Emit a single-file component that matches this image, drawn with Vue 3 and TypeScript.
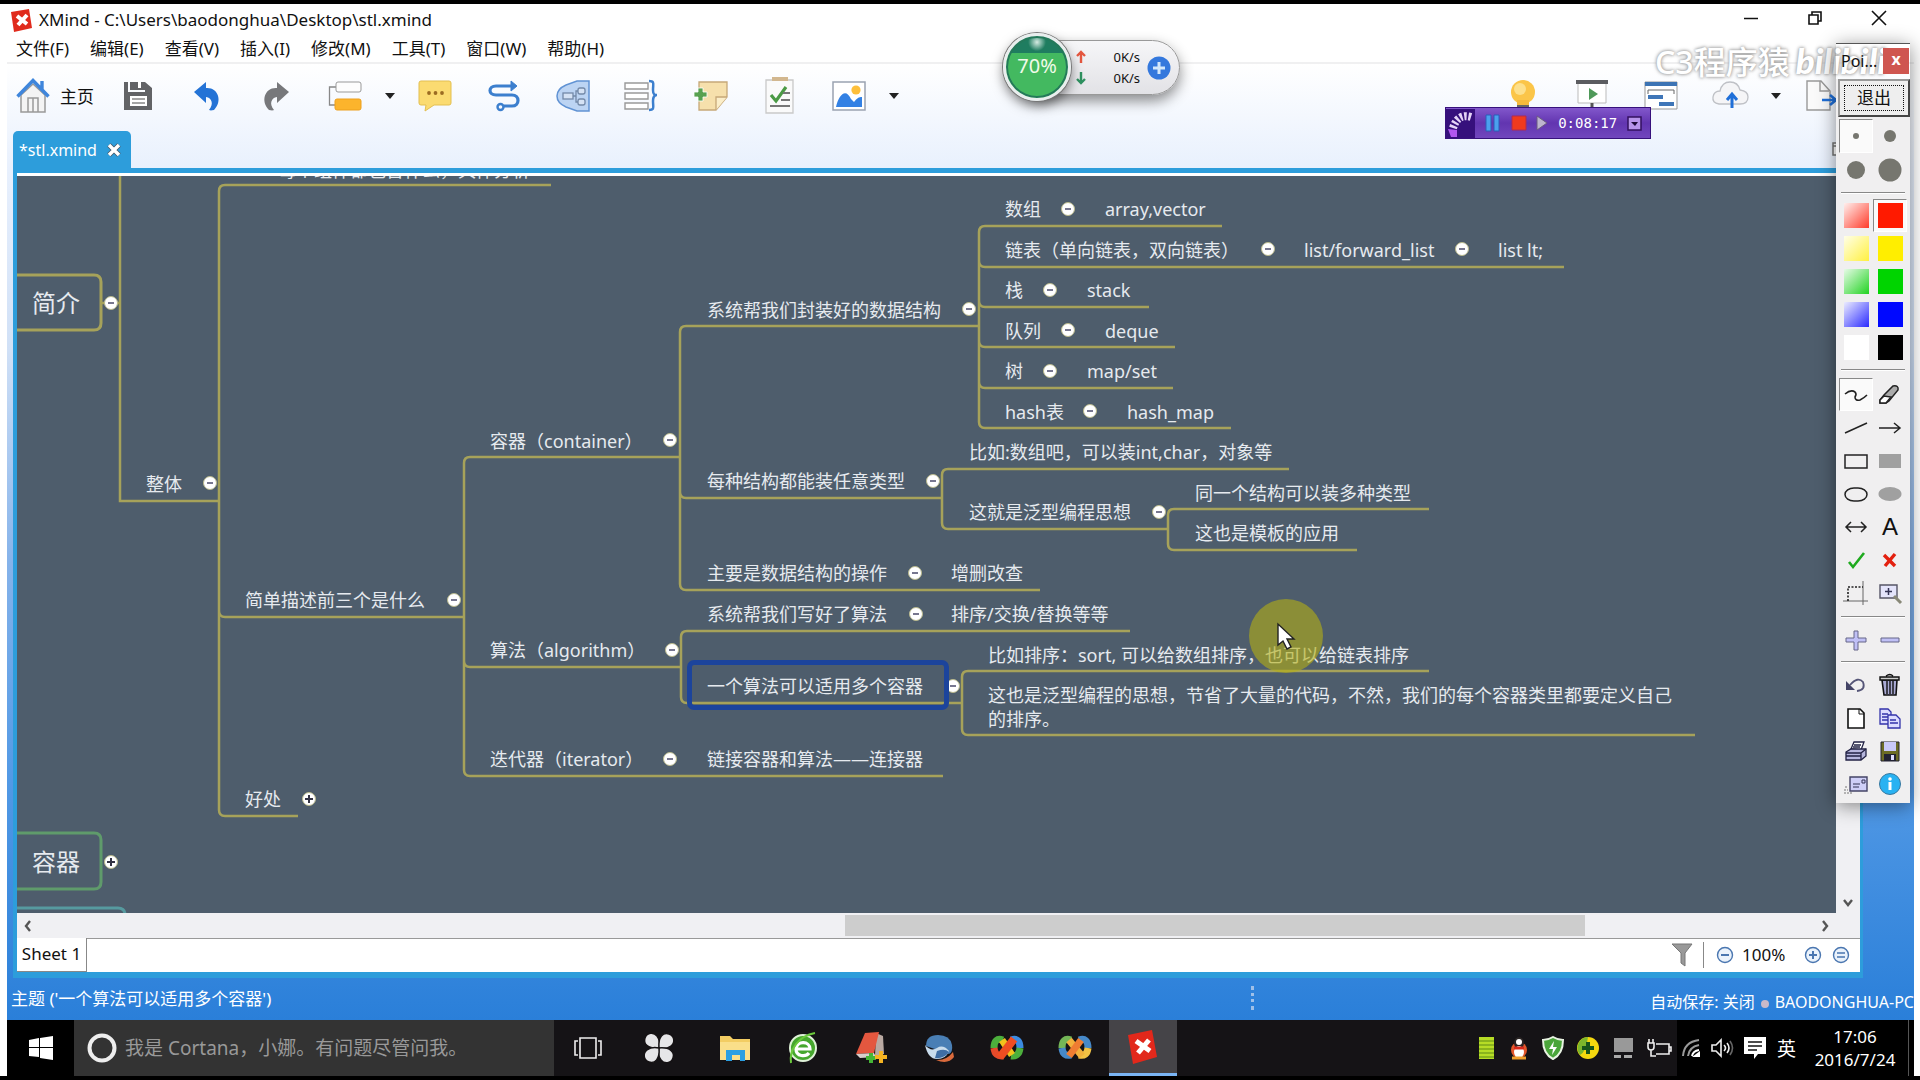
<script setup lang="ts">
interface Topic { x: number; y: number; text: string; size?: 'main' }
interface Toggle { x: number; y: number; open: boolean }
interface Spine { x: number; ends: [number, number][] }

// Scroll offset of the visible part of the map.
const origin = { x: 17, y: 176 }

const menus = ['文件(F)', '编辑(E)', '查看(V)', '插入(I)', '修改(M)', '工具(T)', '窗口(W)', '帮助(H)']

const topics: Topic[] = [
  { x: 278, y: 170, text: '每个组件都包含什么，具体分析' },
  { x: 32, y: 303, text: '简介', size: 'main' },
  { x: 32, y: 862, text: '容器', size: 'main' },
  { x: 146, y: 484, text: '整体' },
  { x: 245, y: 600, text: '简单描述前三个是什么' },
  { x: 245, y: 799, text: '好处' },
  { x: 490, y: 441, text: '容器（container）' },
  { x: 490, y: 650, text: '算法（algorithm）' },
  { x: 490, y: 759, text: '迭代器（iterator）' },
  { x: 707, y: 310, text: '系统帮我们封装好的数据结构' },
  { x: 707, y: 481, text: '每种结构都能装任意类型' },
  { x: 707, y: 573, text: '主要是数据结构的操作' },
  { x: 707, y: 614, text: '系统帮我们写好了算法' },
  { x: 707, y: 686, text: '一个算法可以适用多个容器' },
  { x: 707, y: 759, text: '链接容器和算法——连接器' },
  { x: 1005, y: 209, text: '数组' },
  { x: 1105, y: 209, text: 'array,vector' },
  { x: 1005, y: 250, text: '链表（单向链表，双向链表）' },
  { x: 1304, y: 250, text: 'list/forward_list' },
  { x: 1498, y: 250, text: 'list lt;' },
  { x: 1005, y: 290, text: '栈' },
  { x: 1087, y: 290, text: 'stack' },
  { x: 1005, y: 331, text: '队列' },
  { x: 1105, y: 331, text: 'deque' },
  { x: 1005, y: 371, text: '树' },
  { x: 1087, y: 371, text: 'map/set' },
  { x: 1005, y: 412, text: 'hash表' },
  { x: 1127, y: 412, text: 'hash_map' },
  { x: 969, y: 452, text: '比如:数组吧，可以装int,char，对象等' },
  { x: 969, y: 512, text: '这就是泛型编程思想' },
  { x: 1195, y: 493, text: '同一个结构可以装多种类型' },
  { x: 1195, y: 533, text: '这也是模板的应用' },
  { x: 951, y: 573, text: '增删改查' },
  { x: 951, y: 614, text: '排序/交换/替换等等' },
  { x: 988, y: 655, text: '比如排序：sort, 可以给数组排序，也可以给链表排序' },
  { x: 988, y: 695, text: '这也是泛型编程的思想，节省了大量的代码，不然，我们的每个容器类里都要定义自己\n的排序。' },
]

const toggles: Toggle[] = [
  { x: 111, y: 303, open: true }, { x: 210, y: 483, open: true }, { x: 969, y: 309, open: true },
  { x: 1068, y: 209, open: true }, { x: 1268, y: 249, open: true }, { x: 1462, y: 249, open: true },
  { x: 1050, y: 290, open: true }, { x: 1068, y: 330, open: true }, { x: 1050, y: 371, open: true },
  { x: 1090, y: 411, open: true }, { x: 670, y: 440, open: true }, { x: 933, y: 481, open: true },
  { x: 1159, y: 512, open: true }, { x: 915, y: 573, open: true }, { x: 916, y: 614, open: true },
  { x: 953, y: 686, open: true }, { x: 454, y: 600, open: true }, { x: 672, y: 650, open: true },
  { x: 670, y: 759, open: true }, { x: 309, y: 799, open: false }, { x: 111, y: 862, open: false },
]

const spines: Spine[] = [
  { x: 219, ends: [[185, 551], [617, 464], [816, 298]] },
  { x: 464, ends: [[457, 680], [667, 681], [776, 943]] },
  { x: 680, ends: [[326, 979], [498, 942], [590, 1040]] },
  { x: 979, ends: [[226, 1222], [267, 1564], [307, 1149], [347, 1175], [388, 1173], [428, 1231]] },
  { x: 942, ends: [[469, 1289], [529, 1168]] },
  { x: 1168, ends: [[509, 1429], [550, 1357]] },
  { x: 681, ends: [[631, 1130], [703, 962]] },
  { x: 962, ends: [[671, 1429], [735, 1695]] },
]

function spinePath(s: Spine): string {
  const r = 6
  const last = s.ends.length - 1
  return s.ends
    .map(([y, x2], i) =>
      i === 0
        ? `M${x2} ${y}H${s.x + r}Q${s.x} ${y} ${s.x} ${y + r}V${s.ends[last][0] - r}`
        : `M${s.x} ${y - r}Q${s.x} ${y} ${s.x + r} ${y}H${x2}`)
    .join('')
}

const inks = [
  ['red', '#fff0ee', '#ff3b2a', '#ff1a00'],
  ['yellow', '#ffffe8', '#fff040', '#ffee00'],
  ['green', '#e6fbe6', '#22d322', '#00d400'],
  ['blue', '#ececff', '#2a2aff', '#0008ff'],
  ['black', '#ffffff', '#ffffff', '#000000'],
]
</script>

<template>
  <div class="screen">
    <div class="desk">
      <header class="titlebar">
        <svg class="logo" width="22" height="26" viewBox="0 0 22 26"><path d="M0 5 18 2l3 19-18 4z" fill="#e02b1d" /><path d="m6 9 10 8M16 8 7 18" stroke="#fff" stroke-width="4" /></svg>
        <h1>XMind - C:\Users\baodonghua\Desktop\stl.xmind</h1>
        <div class="winbtns">
          <button aria-label="最小化"><svg width="16" height="16"><path d="M1 8.500h14" stroke="#111" stroke-width="1.500" /></svg></button>
          <button aria-label="还原"><svg width="16" height="16" fill="none" stroke="#111" stroke-width="1.600"><path d="M2 5h9v9H2zM5 5V2h9v9h-3" /></svg></button>
          <button aria-label="关闭"><svg width="16" height="16"><path d="m1 1 14 14M15 1 1 15" stroke="#111" stroke-width="1.600" /></svg></button>
        </div>
      </header>
      <nav class="menubar"><button v-for="m in menus" :key="m">{{ m }}</button></nav>

      <div class="body">
        <div class="toolbar">
          <button class="home">
            <svg width="34" height="36" viewBox="0 0 34 36"><path d="M5 17v17h24V17L17 6z" fill="#f4f4f4" stroke="#999" stroke-width="1.500" /><path d="M12 34V20h10v14M17 20v14" fill="none" stroke="#999" stroke-width="1.500" /><path d="M1.500 18.500 17 2.500l15.500 16M26 11V3" fill="none" stroke="#3f86dc" stroke-width="3.400" /></svg>
            <span>主页</span>
          </button>
          <button aria-label="保存"><svg width="34" height="34" viewBox="0 0 34 34"><path d="M3 3h4v10h17V3l7 6v22H3z" fill="#626366" /><path d="M9 3h15v8H9z" fill="#626366" /><path d="M17 3h3v6h-3z" fill="#fff" /><path d="M9 17h17v10H9z" fill="#fff" /><path d="M11 20h13M11 24h13" stroke="#888" stroke-width="1.500" /></svg></button>
          <button aria-label="撤销"><svg width="34" height="34" viewBox="0 0 34 34"><path d="M4 13 16 3v6c12-1 17 13 8 22-4 1-5 0-5 0 5-6 3-12-3-13v6z" fill="#2473d6" /></svg></button>
          <button aria-label="重做"><svg width="34" height="34" viewBox="0 0 34 34"><path d="M30 13 18 3v6C6 8 1 22 10 31c4 1 5 0 5 0-5-6-3-12 3-13v6z" fill="#77787b" /></svg></button>
          <span class="split">
            <button aria-label="主题"><svg width="34" height="34" viewBox="0 0 34 34"><path d="M8 8H1.500v18H8" fill="none" stroke="#888" stroke-width="1.300" /><rect x="8" y="3" width="25" height="10" rx="2" fill="#fdfdfd" stroke="#999" /><rect x="7" y="20" width="26" height="11" rx="2" fill="#fcb42c" stroke="#eda01d" /></svg></button>
            <button class="caret" aria-label="更多主题"><svg width="12" height="8"><path d="M1 1h10L6 7z" fill="#222" /></svg></button>
          </span>
          <button aria-label="标注"><svg width="34" height="34" viewBox="0 0 34 34"><path d="M3 2h28q2 0 2 2v20q0 2-2 2H16l-9 6 1-6H3q-2 0-2-2V4q0-2 2-2z" fill="#fbdb71" stroke="#e3bf51" /><g fill="#9b6b22"><circle cx="11" cy="14" r="1.900" /><circle cx="17.500" cy="14" r="1.900" /><circle cx="24" cy="14" r="1.900" /></g></svg></button>
          <button aria-label="联系"><svg width="34" height="34" viewBox="0 0 34 34" fill="none" stroke="#3c7fce" stroke-width="3.200"><path d="M27 7H9c-8 0-8 9 0 9h16c8 0 8 11 0 11h-8" /><circle cx="13.500" cy="28" r="3" stroke-width="2.400" /><path d="m24 2 6 5-6 5z" fill="#3c7fce" stroke-width="1" /></svg></button>
          <button aria-label="外框"><svg width="34" height="34" viewBox="0 0 34 34"><path d="M10 6 21 2h12v30H21L10 28Q1 24 1 17t9-11z" fill="#bcd4f3" stroke="#6193d4" stroke-width="1.500" /><g fill="#d5e2f4" stroke="#7389a8" stroke-width="1.300"><path d="M17 17h3m3-5h-3v11h3" fill="none" /><rect x="7" y="14" width="10" height="6" /><rect x="22" y="9" width="7" height="6" rx="2" /><rect x="22" y="20" width="7" height="6" rx="2" /></g></svg></button>
          <button aria-label="概要"><svg width="36" height="34" viewBox="0 0 36 34" fill="#fff" stroke="#999" stroke-width="1.400"><path d="M1 4h23v6H1zM1 14h23v6H1zM1 24h23v6H1z" /><path d="M25 2c6 0 4 3 4 9 0 4 1 5 4 5-3 0-4 2-4 6 0 6 2 9-4 9" fill="none" stroke="#3c7fce" stroke-width="2.500" /></svg></button>
          <button aria-label="备注"><svg width="34" height="34" viewBox="0 0 34 34"><path d="M5 3h28v15L22 31H5z" fill="#f6e0ac" stroke="#c6a878" stroke-width="1.300" /><path d="M33 18H22v13" fill="#fbeec9" stroke="#c6a878" stroke-width="1.300" /><path d="M4 9h5v4h4v5H9v4H4v-4H0v-5h4z" fill="#58a150" stroke="#fff" stroke-width=".8" /></svg></button>
          <button aria-label="任务"><svg width="34" height="38" viewBox="0 0 34 38"><path d="M3 3h27v33H3z" fill="#fafafa" stroke="#c9c9c9" stroke-width="1.300" /><path d="M9 0h16v4H9z" fill="#d2b78f" /><path d="m8 18 5 6 10-14" fill="none" stroke="#4b9a45" stroke-width="3.200" /><path d="M20 16h7M18 23h9M7 29h20" stroke="#777" stroke-width="1.800" /></svg></button>
          <span class="split">
            <button aria-label="图片"><svg width="34" height="34" viewBox="0 0 34 34"><path d="M1 3h32v28H1z" fill="#fff" stroke="#9aa3b1" stroke-width="1.500" /><path d="M4 28c3-13 10-19 15-8l3 3c3-4 5-5 8-5v10z" fill="#3381e4" /><circle cx="24" cy="11" r="4.600" fill="#fdbf3b" /></svg></button>
            <button class="caret" aria-label="更多插入"><svg width="12" height="8"><path d="M1 1h10L6 7z" fill="#222" /></svg></button>
          </span>
          <div class="grow"></div>
          <button aria-label="灵感"><svg width="34" height="36" viewBox="0 0 34 36"><circle cx="17" cy="14" r="12" fill="#fbc549" /><circle cx="14" cy="11" r="6" fill="#fde08c" /><path d="M11 22h12v5H11z" fill="#f5b93c" /><path d="M11 27h12v6H11z" fill="#666" /></svg></button>
          <button aria-label="演示"><svg width="34" height="36" viewBox="0 0 34 36"><path d="M3 4h28v21H3z" fill="#fff" stroke="#bbb" /><path d="M1 2h32v4H1z" fill="#5b5c60" /><path d="m14 10 9 6-9 6z" fill="#4f9959" /><path d="M17 25v8" stroke="#555" stroke-width="3" /></svg></button>
          <button aria-label="甘特图"><svg width="34" height="34" viewBox="0 0 34 34"><path d="M1 3h32v27H1z" fill="#fff" stroke="#999" /><path d="M1 3h32v4H1z" fill="#3d74b4" /><path d="M4 15v-4h26v4" fill="none" stroke="#666" /><path d="M4 16h15v4H4zM15 23h15v4H15z" fill="#3f76b8" /></svg></button>
          <button aria-label="上传"><svg width="38" height="34" viewBox="0 0 38 34"><path d="M8 25Q1 24 2 18q1-6 7-6 2-9 10-9t10 8q8 1 8 7 0 7-8 7z" fill="#f5f5f7" stroke="#bfc1c6" stroke-width="1.300" /><path d="M21 29V16m-5 5 5-6 5 6" fill="none" stroke="#1f6fd8" stroke-width="3" /></svg></button>
          <button class="caret" aria-label="更多上传"><svg width="12" height="8"><path d="M1 1h10L6 7z" fill="#222" /></svg></button>
          <button class="export" aria-label="导出"><svg width="34" height="34" viewBox="0 0 34 34"><path d="M2 2h14l9 10v19H2z" fill="#fafafa" stroke="#999" stroke-width="1.400" /><path d="M15 2v10h9" fill="none" stroke="#999" stroke-width="1.400" /><path d="M17 21h13m-5-5 6 5-6 5" fill="none" stroke="#1f6fd8" stroke-width="2.600" /></svg></button>
        </div>

        <div class="tabs">
          <div class="tab"><span>*stl.xmind</span><button aria-label="关闭标签"><svg width="16" height="16"><path d="m3 3 10 10M13 3 3 13" stroke="#456" stroke-width="5" /><path d="m3 3 10 10M13 3 3 13" stroke="#fff" stroke-width="3.500" /></svg></button></div>
          <svg class="maxi" width="16" height="14"><path d="M1 1h14v12H1zM1 4h14" fill="#fff" stroke="#777" stroke-width="1.500" /></svg>
        </div>

        <main class="editor">
          <div class="view">
            <section class="canvas">
              <svg class="lines">
                <g :transform="`translate(${-origin.x} ${-origin.y})`" fill="none" stroke="#a6a25a" stroke-width="3">
                  <path d="M120 170V501H219M101 303h19" stroke-width="2.500" />
                  <path v-for="s in spines" :key="s.x" :d="spinePath(s)" stroke-width="2.500" />
                  <path d="M10 275H94Q101 275 101 282V323Q101 330 94 330H10" />
                  <path d="M10 833H94Q101 833 101 840V882Q101 889 94 889H10" stroke="#5f9b6b" />
                  <path d="M10 908H118Q125 908 125 915V925" stroke="#569a9f" />
                </g>
              </svg>
              <button
                v-for="t in toggles" :key="`${t.x}-${t.y}`" class="toggle" :class="{ closed: !t.open }"
                :aria-label="t.open ? '折叠' : '展开'" :style="{ left: `${t.x - origin.x}px`, top: `${t.y - origin.y}px` }"
              ></button>
              <div class="selection"></div>
              <div v-for="t in topics" :key="t.text" class="topic" :class="t.size" :style="{ left: `${t.x - origin.x}px`, top: `${t.y - origin.y}px` }">{{ t.text }}</div>
              <div class="spot"></div>
              <svg class="pointer" width="20" height="28" viewBox="0 0 20 28"><path d="M2 1v21l5-4 4 8 4-2-4-8h7z" fill="#fff" stroke="#222" stroke-width="1.400" /></svg>
            </section>
            <div class="vscroll"><svg width="12" height="12"><path d="m2 3 4 5 4-5" fill="none" stroke="#555" stroke-width="2.400" /></svg></div>
          </div>
          <div class="hscroll">
            <div class="lead"><svg width="12" height="14"><path d="M8 2 4 7l4 5" fill="none" stroke="#555" stroke-width="2.400" /></svg></div>
            <div class="thumb"></div>
            <div class="trail"><svg width="12" height="14"><path d="m4 2 4 5-4 5" fill="none" stroke="#555" stroke-width="2.400" /></svg></div>
          </div>
          <div class="sheets">
            <button class="sheet">Sheet 1</button>
            <div class="zoombar">
              <button aria-label="筛选"><svg width="22" height="26"><path d="M1 2h20l-7 9v13l-4-3V11z" fill="#999" stroke="#777" /></svg></button>
              <i></i>
              <button aria-label="缩小"><svg width="18" height="18" fill="none" stroke="#4a76b0" stroke-width="1.400"><circle cx="9" cy="9" r="7.500" fill="#eaf2fb" /><path d="M5 9h8" stroke-width="2" /></svg></button>
              <span>100%</span>
              <button aria-label="放大"><svg width="18" height="18" fill="none" stroke="#4a76b0" stroke-width="1.400"><circle cx="9" cy="9" r="7.500" fill="#eaf2fb" /><path d="M5 9h8M9 5v8" stroke-width="2" /></svg></button>
              <button aria-label="适合"><svg width="18" height="18" fill="none" stroke="#4a76b0" stroke-width="1.400"><circle cx="9" cy="9" r="7.500" fill="#eaf2fb" /><path d="M5 7h8M5 11h8" stroke-width="1.600" /></svg></button>
            </div>
          </div>
        </main>

        <footer class="status">
          <span>主题 ('一个算法可以适用多个容器')</span>
          <i class="grip"></i>
          <span class="save">自动保存: 关闭<b></b>BAODONGHUA-PC</span>
        </footer>
      </div>

      <div class="taskbar">
        <button class="start" aria-label="开始"><svg width="24" height="24"><path d="m0 4 10-2v9H0zM11 2l13-2v11H11zM0 12h10v9L0 20zM11 12h13v12l-13-2z" fill="#fff" /></svg></button>
        <label class="search"><svg width="32" height="32"><circle cx="16" cy="16" r="12.500" fill="none" stroke="#eee" stroke-width="4" /></svg><input type="text" placeholder="我是 Cortana，小娜。有问题尽管问我。" aria-label="搜索"></label>
        <button class="app" aria-label="任务视图"><svg width="30" height="24" fill="none" stroke="#eee" stroke-width="1.600"><path d="M7 2h16v20H7zM5 5H2v14h3M25 5h3v14h-3" /></svg></button>
        <div class="apps">
          <button class="app first" aria-label="应用中心"><svg width="34" height="34" viewBox="0 0 34 34" fill="#e6e6e8" stroke="#151214" stroke-width="1.500"><path d="M17 17C6 18 1 13 3 7s9-6 12-2 3 8 2 12z" /><path d="M17 17C16 6 21 1 27 3s6 9 2 12-8 3-12 2z" /><path d="M17 17c11-1 16 4 14 10s-9 6-12 2-3-8-2-12z" /><path d="M17 17c1 11-4 16-10 14s-6-9-2-12 8-3 12-2z" /></svg></button>
          <button class="app" aria-label="资源管理器"><svg width="32" height="30"><path d="M1 3h10l3 3h17v20H1z" fill="#f3cd63" /><path d="M1 9h30v18H1z" fill="#fadf8a" /><path d="M7 17h19v11h-5v-6h-8v6H7z" fill="#2b9fe2" /></svg></button>
          <button class="app" aria-label="浏览器"><svg width="32" height="34" viewBox="0 0 32 34"><circle cx="16" cy="17" r="13" fill="#46a72e" stroke="#dff2d8" stroke-width="2" /><path d="M9 18h14c0-8-13-9-14 0 0 8 10 8 13 4" fill="none" stroke="#fff" stroke-width="3.200" /><path d="M4 32C2 18 12 5 28 2" fill="none" stroke="#6bc93c" stroke-width="2" /></svg></button>
          <button class="app" aria-label="词典"><svg width="34" height="34" viewBox="0 0 34 34"><path d="m22 2 7 3 1 18-9 2z" fill="#b9a9a2" /><path d="M11 2 25 1l-5 21-18 1z" fill="#e4573f" /><path d="m2 23 18-1 2 4-16 1z" fill="#d8cfcc" /><path d="M17 22v10M12 27h10" stroke="#44b535" stroke-width="4" /><path d="M27 20v12M21 26h12" stroke="#f5b422" stroke-width="4" /></svg></button>
          <button class="app" aria-label="虚拟机"><svg width="34" height="32" viewBox="0 0 34 32"><path d="M4 14Q4 3 16 3t14 10q1 7-3 9z" fill="#4a7fb5" /><path d="M3 13q6 7 12 3t12 3q-3 8-12 8T3 13z" fill="#c9dcec" /><path d="M15 19q8-3 12 1-5 7-14 6z" fill="#3f6ea4" /><path d="M14 28q10 1 17-8l1 5q-6 8-18 3z" fill="#da6a3c" /></svg></button>
          <button class="app" aria-label="工具一"><svg width="34" height="26" fill="none" stroke-width="7"><path d="M13 5q-9-3-9 8" stroke="#4caf3c" /><path d="M4 13q1 9 9 8" stroke="#e64a2a" /><path d="M21 5q9-3 9 8" stroke="#3c8be0" /><path d="M30 13q-1 9-9 8" stroke="#4caf3c" /><path d="m12 5 10 15" stroke="#f2c21c" /><path d="M24 4 10 22" stroke="#f04d22" stroke-width="8" /></svg></button>
          <button class="app" aria-label="工具二"><svg width="34" height="26" fill="none" stroke-width="7"><path d="M13 5q-9-3-9 8" stroke="#74b657" /><path d="M4 13q1 9 9 7" stroke="#4689c9" /><path d="M21 5q9-3 9 8" stroke="#4689c9" /><path d="M30 13q-1 9-9 7" stroke="#f3c344" /><path d="m11 5 13 16" stroke="#f2b13c" /><path d="M23 5 11 21" stroke="#ef7d32" /></svg></button>
          <button class="app active" aria-label="XMind"><svg width="32" height="36" viewBox="0 0 32 36"><path d="m1 6 24-5 5 27-24 7z" fill="#e2281b" /><path d="m9 12 14 10M22 11 11 24" stroke="#fff" stroke-width="5" /></svg></button>
        </div>
        <div class="grow"></div>
        <div class="tray">
          <svg width="20" height="24"><path d="M2 1h15v22H2z" fill="#b6dc26" /><path d="M2 5h15M2 9h15M2 13h15M2 17h15M2 21h15" stroke="#5f8b14" /></svg>
          <svg width="20" height="24"><ellipse cx="10" cy="14" rx="8" ry="8" fill="#e2572b" /><ellipse cx="10" cy="7" rx="5" ry="6" fill="#292424" /><ellipse cx="10" cy="6" rx="3" ry="3" fill="#fff" /><ellipse cx="10" cy="16" rx="5" ry="6" fill="#fff" /><path d="M5 12h10" stroke="#d92a1c" stroke-width="3" /><path d="M3 22h14" stroke="#f1a02c" stroke-width="3" /></svg>
          <svg width="22" height="24"><path d="M11 1q5 3 10 3 0 14-10 19Q1 18 1 4q5 0 10-3z" fill="#4aa63a" stroke="#e8f3e2" stroke-width="2" /><path d="m12 5-5 8h4l-1 6 5-8h-4z" fill="#fff" /></svg>
          <svg width="24" height="24"><circle cx="12" cy="12" r="11" fill="#f4d80f" /><path d="M12 1a11 11 0 0 0-8 18q6-3 8-18z" fill="#7cb72c" /><path d="M12 6v12M6 12h12" stroke="#17551a" stroke-width="4" /></svg>
          <svg width="22" height="22"><path d="M2 1h19v14H2z" fill="#999" /><path d="M2 18h7v3H2zM12 18h8v3h-8z" fill="#aaa" /></svg>
          <svg width="24" height="22" fill="none" stroke="#eee" stroke-width="1.600"><path d="M9 7h13v10H9M22 10h2v4h-2M1 6h6v4q0 3-3 3t-3-3zM2 6V2m4 4V2M4 13v6h5" /></svg>
        </div>
        <div class="system">
          <svg width="20" height="20" fill="none" stroke="#999" stroke-width="2"><path d="M2 18Q3 4 18 2M7 18Q8 9 18 7" /><path d="M11 18q1-5 7-6" stroke="#fff" /><path d="M14 18h4v-3z" fill="#fff" stroke="#fff" /></svg>
          <svg width="22" height="20" fill="none" stroke="#eee" stroke-width="1.600"><path d="M1 7h4l5-5v16l-5-5H1zM13 7q3 3 0 6M16 5q4 5 0 10" /><path d="M19 3q5 7 0 14" stroke="#666" /></svg>
          <svg width="24" height="24"><path d="M1 1h22v17h-8l-4 5v-5H1z" fill="#fff" /><path d="M5 6h14M5 10h14M5 14h9" stroke="#111" stroke-width="1.500" /></svg>
          <span>英</span>
          <time>17:06<br>2016/7/24</time>
          <button class="peek" aria-label="显示桌面"></button>
        </div>
      </div>
    </div>

    <div class="net">
      <div class="rates"><p><svg width="10" height="14"><path d="M5 13V3M1 6l4-4 4 4" fill="none" stroke="#e4573f" stroke-width="2.400" /></svg>0K/s</p><p><svg width="10" height="14"><path d="M5 1v10M1 8l4 4 4-4" fill="none" stroke="#2f9160" stroke-width="2.400" /></svg>0K/s</p></div>
      <button aria-label="加速"><svg width="24" height="24"><circle cx="12" cy="12" r="11.500" fill="#3478dd" /><path d="M12 6v12M6 12h12" stroke="#d3e7fb" stroke-width="3" /></svg></button>
      <div class="ball">70%</div>
    </div>

    <div class="recorder">
      <svg width="29" height="29" viewBox="0 0 29 29"><path d="M0 0h29v29H0z" fill="#36107c" /><path d="M25 8Q12 4 7 19" fill="none" stroke="#e5d4f7" stroke-width="8" stroke-dasharray="2.500 1.800" /><path d="m2 20 9 1v7H5z" fill="#b257f0" /></svg>
      <button aria-label="暂停"><svg width="16" height="18"><path d="M1 1h5v16H1zM9 1h5v16H9z" fill="#4ba0ee" stroke="#2a5fb8" /></svg></button>
      <button aria-label="停止"><svg width="16" height="16"><path d="M1 1h14v14H1z" fill="#f03a1e" stroke="#b12b50" /></svg></button>
      <button aria-label="播放"><svg width="12" height="16"><path d="m1 1 10 7-10 7z" fill="#bdb4ce" stroke="#6a5a80" /></svg></button>
      <time>0:08:17</time>
      <button aria-label="选项"><svg width="15" height="15"><path d="M1 1h13v13H1z" fill="#b794ea" stroke="#33105f" stroke-width="1.500" /><path d="M4 6h7l-3 4z" fill="#1d0a38" /></svg></button>
    </div>

    <div class="mark"><span>C3程序猿</span><b>bilibili</b></div>

    <aside class="palette">
      <div class="cap"><span>Poi...</span><button aria-label="关闭工具">x</button></div>
      <button class="exit">退出</button>
      <div class="grid dots">
        <button class="on" aria-label="极细"><svg width="24" height="24"><circle cx="12" cy="12" r="3" fill="#76766f" /></svg></button>
        <button aria-label="细"><svg width="24" height="24"><circle cx="12" cy="12" r="6" fill="#76766f" /></svg></button>
        <button aria-label="中"><svg width="24" height="24"><circle cx="12" cy="12" r="9" fill="#76766f" /></svg></button>
        <button aria-label="粗"><svg width="24" height="24"><circle cx="12" cy="12" r="11.500" fill="#76766f" /></svg></button>
      </div>
      <hr>
      <div class="grid">
        <template v-for="(k, i) in inks" :key="k[0]">
          <button :aria-label="`${k[0]} 荧光`"><i :style="{ background: `linear-gradient(135deg, ${k[1]}, ${k[2]})` }"></i></button>
          <button :aria-label="k[0]" :class="{ on: i === 0 }"><i :style="{ background: k[3] }"></i></button>
        </template>
      </div>
      <hr>
      <div class="grid tools">
        <button class="on" aria-label="画笔"><svg width="24" height="24" fill="none" stroke="#222" stroke-width="1.600"><path d="M1 11q6-5 10-2 2 2 0 5 0 4 5 3 4-2 7-5" /></svg></button>
        <button aria-label="橡皮"><svg width="24" height="24"><path d="m2 17 4-5 9-9q6-1 5 4l-9 11-3 2H2z" fill="#aaa" stroke="#222" stroke-width="1.500" /><path d="m2 17 4-4 7 1-5 6H2z" fill="#fff" stroke="#222" stroke-width="1.500" /></svg></button>
        <button aria-label="直线"><svg width="24" height="24"><path d="M1 17 23 7" stroke="#222" stroke-width="1.500" /></svg></button>
        <button aria-label="箭头"><svg width="24" height="24" fill="none" stroke="#222" stroke-width="1.500"><path d="M1 12h21m-6-5 6 5-6 5" /></svg></button>
        <button aria-label="矩形"><svg width="24" height="24"><path d="M1 6h22v13H1z" fill="none" stroke="#222" stroke-width="1.500" /></svg></button>
        <button aria-label="实心矩形"><svg width="24" height="24"><path d="M1 5h22v14H1z" fill="#a0a0a0" /></svg></button>
        <button aria-label="椭圆"><svg width="24" height="24"><rect x="1" y="6" width="22" height="13" rx="9" fill="none" stroke="#222" stroke-width="1.500" /></svg></button>
        <button aria-label="实心椭圆"><svg width="24" height="24"><ellipse cx="12" cy="12" rx="11.500" ry="7" fill="#a0a0a0" /></svg></button>
        <button aria-label="双箭头"><svg width="24" height="24" fill="none" stroke="#222" stroke-width="1.500"><path d="M2 12h20m-5-5 5 5-5 5M7 7l-5 5 5 5" /></svg></button>
        <button aria-label="文字" class="letter">A</button>
        <button aria-label="对勾"><svg width="24" height="24"><path d="m5 14 4 5L20 5" fill="none" stroke="#1faa1f" stroke-width="2.600" /></svg></button>
        <button aria-label="叉"><svg width="24" height="24"><path d="m6 7 11 11M17 6 7 18" stroke="#e3200f" stroke-width="3.400" /></svg></button>
        <button aria-label="截取"><svg width="26" height="26" fill="none"><path d="M0 21h25M20 1v24" stroke="#666" /><path d="M5 21V7h15" stroke="#222" stroke-width="1.600" stroke-dasharray="2 1.500" /></svg></button>
        <button aria-label="放大镜"><svg width="24" height="24"><path d="M2 4h17v13H2z" fill="#e4e4fb" stroke="#556" stroke-width="1.400" /><path d="M7 10.500h7M10.500 7v7" stroke="#335" stroke-width="1.500" /><path d="m16 15 7 7" stroke="#887" stroke-width="3" /></svg></button>
      </div>
      <hr>
      <div class="grid">
        <button aria-label="增大"><svg width="24" height="24"><path d="M10 3h4v7h8v4h-8v8h-4v-8H2v-4h8z" fill="#c0c0f6" stroke="#668" /></svg></button>
        <button aria-label="减小"><svg width="24" height="24"><path d="M3 10h18v4H3z" fill="#c0c0f6" stroke="#668" /></svg></button>
      </div>
      <hr>
      <div class="grid">
        <button aria-label="撤消"><svg width="24" height="24"><path d="M6 12q8-9 13-3 3 8-6 9" fill="none" stroke="#557" stroke-width="1.800" /><path d="M2 8v9h9z" fill="#446" /></svg></button>
        <button aria-label="清空"><svg width="24" height="26" viewBox="0 0 24 26"><path d="M4 8h15l-1 15H6z" fill="#aaaad4" stroke="#111" stroke-width="1.600" /><path d="M2 5h19v3H2zM8 4q4-3 7 0M9 9v13M12 9v13M15 9v13" fill="#ccc" stroke="#111" stroke-width="1.400" /></svg></button>
        <button aria-label="新页"><svg width="24" height="24"><path d="M4 3h12l4 4v15H4z" fill="#fff" stroke="#111" stroke-width="1.600" /><path d="M15 3v5h5" fill="none" stroke="#111" /></svg></button>
        <button aria-label="复制"><svg width="24" height="24" stroke="#33a" stroke-width="1.300"><path d="M2 3h8l3 3v12H2z" fill="#dcdcff" /><path d="M4 8h6M4 11h6M4 14h6" /><path d="M10 9h8l4 4v9H10z" fill="#dcdcff" /><path d="M12 14h6M12 17h8" /></svg></button>
        <button aria-label="打印"><svg width="24" height="24" stroke="#224" stroke-width="1.300"><path d="m7 10 3-7h10l-3 8z" fill="#fff" /><path d="M10 6h7M9 8h7" /><path d="m2 13 5-3h15v7l-5 4H2z" fill="#b6b6dd" /><path d="M2 14h15v7M2 17h15M17 14l5-4" fill="none" /></svg></button>
        <button aria-label="存盘"><svg width="24" height="24"><path d="M3 3h18v19H3z" fill="#6c6c24" stroke="#223" /><path d="M6 3h12v9H6z" fill="#c9c9f8" /><path d="M6 15h12v7H6z" fill="#223" /><path d="M13 16h3v5h-3z" fill="#ddf" /></svg></button>
        <button aria-label="邮件"><svg width="26" height="24"><path d="M7 5h17v14H7z" fill="#cfcff8" stroke="#446" stroke-width="1.400" /><path d="M10 12h7M10 15h6M19 8h3v3h-3z" stroke="#335" fill="none" /><path d="M1 18h4M2 15h3M1 21h8" stroke="#777" stroke-dasharray="2 1" /></svg></button>
        <button aria-label="关于"><svg width="24" height="24"><circle cx="12" cy="12" r="10.500" fill="#29b2f2" stroke="#3778a0" /><path d="M12 10v8" stroke="#fff" stroke-width="3" /><circle cx="12" cy="7" r="1.800" fill="#fff" /></svg></button>
      </div>
    </aside>
  </div>
</template>

<style>
body { margin: 0; background: #000; }
</style>

<style scoped>
* { box-sizing: border-box; }
.screen {
  position: relative; min-height: 100vh; display: flex; flex-direction: column; overflow: hidden;
  border-top: 4px solid #000; border-bottom: 4px solid #000; background: #fff;
  font-family: "Noto Sans", "Noto Sans CJK SC", sans-serif; font-size: 17px; color: #111;
}
button { border: 0; padding: 0; margin: 0; background: none; font: inherit; color: inherit; display: flex; align-items: center; justify-content: center; }
svg { display: block; flex: none; overflow: visible; }
.grow { flex: 1; }
.desk { flex: 1; display: flex; flex-direction: column; margin: 0 6px 0 7px; overflow: hidden; }

.titlebar { display: flex; align-items: center; height: 32px; padding-left: 4px; }
.titlebar h1 { margin: 0 0 0 6px; font-size: 17px; font-weight: 400; line-height: 32px; }
.winbtns { margin-left: auto; display: flex; gap: 48px; padding: 0 27px 4px 0; }
.menubar { display: flex; gap: 21px; height: 28px; padding: 0 9px; border-bottom: 2px solid #f0f0f1; font-size: 17px; line-height: 26px; }

.body {
  flex: 1; display: flex; flex-direction: column;
  background: linear-gradient(#fff 0%, #e8f0fd 11%, #d0e0f6 30%, #86b3ea 52%, #5299e5 75%, #2a7fd9 100%);
}
.toolbar { display: flex; align-items: center; gap: 35px; height: 63px; padding: 0 75px 0 9px; }
.toolbar button { width: 34px; height: 36px; }
.toolbar .home { width: 78px; gap: 10px; margin-right: -8px; justify-content: flex-start; white-space: nowrap; }
.toolbar .caret { width: 12px; }
.split { display: flex; gap: 22px; margin-right: -13px; }
.toolbar > .caret { margin: 0 -12px; }
.tabs { display: flex; align-items: flex-end; justify-content: space-between; height: 41px; padding: 0 66px 0 6px; }
.tab { display: flex; align-items: center; gap: 9px; height: 37px; padding: 0 9px 0 6px; border-radius: 5px 5px 0 0; background: #2d9ddb; color: #fff; font-size: 16px; }
.maxi { margin-bottom: 12px; }
.editor { flex: 1; display: flex; flex-direction: column; margin: 0 51px 0 6px; border: solid #2d9ddb; border-width: 5px 3px 6px 4px; background: #fff; padding-top: 3px; }
.view { flex: 1; display: flex; }
.canvas { position: relative; flex: 1; min-height: 737px; background: #4e5d6c; overflow: hidden; }
.vscroll { width: 24px; background: #f0f0f3; display: flex; align-items: flex-end; justify-content: center; padding-bottom: 4px; }
.hscroll { display: flex; height: 25px; padding: 2px 24px 2px 0; background: #f0f0f3; }
.hscroll div { display: flex; align-items: center; }
.lead { flex: 828; padding-left: 5px; }
.thumb { flex: 744; background: #cdcdcd; }
.trail { flex: 247; justify-content: flex-end; padding-right: 5px; }
.sheets { display: flex; justify-content: space-between; height: 34px; }
.sheet { width: 70px; padding-bottom: 2px; border-right: 1px solid #888; border-bottom: 1px solid #888; }
.zoombar { flex: 1; display: flex; align-items: center; justify-content: flex-end; border-top: 1px solid #999; padding: 0 10px 2px 0; }
.zoombar i { width: 1px; height: 26px; margin: 0 12px 0 10px; background: #888; }
.zoombar span { width: 70px; padding-left: 8px; }
.zoombar button + button { margin-left: 10px; }
.status { display: flex; align-items: center; justify-content: space-between; position: relative; height: 42px; padding: 0 0 3px 4px; color: #fff; white-space: nowrap; }
.grip { position: absolute; left: calc(65% + 4px); height: 24px; border-left: 3px dotted #9fc0e8; }
.save { font-size: 16px; padding-top: 6px; }
.save b { display: inline-block; width: 8px; height: 8px; margin: 0 6px; border-radius: 50%; background: #c9b9c9; }

.lines { position: absolute; inset: 0; width: 100%; height: 100%; }
.topic { position: absolute; transform: translateY(-12px); font-size: 18px; line-height: 24px; white-space: pre; color: #e6eaef; }
.topic.main { font-size: 24px; }
.toggle { position: absolute; width: 14px; height: 14px; margin: -7px; border: 1px solid #b9b98c; border-radius: 50%; background: linear-gradient(#77778f, #77778f) center / 6px 2px no-repeat #fff; }
.toggle.closed { background: linear-gradient(#334, #334) center / 8px 2px no-repeat, linear-gradient(#334, #334) center / 2px 8px no-repeat #fff; }
.selection { position: absolute; left: 670px; top: 484px; width: 262px; height: 50px; border: 5px solid #1c449c; border-radius: 7px; }
.spot { position: absolute; left: 1232px; top: 423px; width: 74px; height: 74px; border-radius: 50%; background: rgba(180, 175, 20, .6); }
.pointer { position: absolute; left: 1259px; top: 447px; }

.taskbar { display: flex; height: 56px; background: #151316; color: #fff; }
.start { width: 67px; background: #000; }
.search { display: flex; align-items: center; gap: 7px; width: 480px; padding-left: 12px; background: #333; }
.search input { flex: 1; border: 0; padding: 0; background: none; font: inherit; font-size: 19px; color: #aaa; }
.search input::placeholder { color: #999; opacity: 1; }
.app { width: 68px; height: 56px; }
.apps { display: flex; }
.first { margin: 0 8px 0 3px; }
.active { background: #454448; border-bottom: 3px solid #7ab5f5; }
.tray, .system { display: flex; align-items: center; }
.tray { width: 206px; justify-content: space-around; }
.system { background: #000; padding-left: 4px; gap: 10px; font-size: 19px; }
.system time { width: 98px; text-align: center; font-size: 17px; line-height: 23px; }
.peek { width: 6px; height: 56px; margin-left: -6px; border-left: 1px solid #555; }

.net { position: absolute; left: calc(50% + 60px); top: 36px; display: flex; align-items: center; width: 160px; height: 55px; padding-left: 55px; border: 1px solid #999; border-radius: 28px; background: linear-gradient(#f6f6f8, #e2e2e6); box-shadow: 0 6px 14px rgba(0, 0, 0, .45); }
.rates { width: 66px; font-size: 13px; line-height: 21px; }
.rates p { display: flex; align-items: center; justify-content: space-between; margin: 0; padding-right: 2px; }
.net > button { margin-left: 5px; }
.ball { position: absolute; left: -18px; top: -8px; width: 68px; height: 68px; border: 3px solid #e9eeee; border-radius: 50%; background: radial-gradient(circle at 50% 10%, #d5ebe2 0, transparent 14%), linear-gradient(#1f7d60 0 28%, #43b960 28%); box-shadow: 0 0 0 1px #777, 0 5px 12px rgba(0, 0, 0, .5), inset 0 0 0 2px #24795a; color: #effbe9; font-size: 20px; line-height: 60px; text-align: center; }
.recorder { position: absolute; right: 269px; top: 103px; display: flex; align-items: center; justify-content: space-between; width: 206px; height: 32px; padding: 0 8px 0 0; border: 1px solid #37117c; background: linear-gradient(#8257cb, #6235b0 50%, #7146bd); color: #fff; }
.recorder time { font: 14px "DejaVu Sans Mono", monospace; }

.palette { position: absolute; right: 10px; top: 39px; width: 74px; padding-bottom: 3px; background: linear-gradient(transparent 36px, #f0eff0 36px); box-shadow: 0 3px 18px rgba(0, 0, 0, .45); }
.cap { display: flex; align-items: center; justify-content: space-between; height: 36px; padding: 0 1px 2px 5px; border-top: 1px solid #555; font-size: 16px; }
.cap button { width: 26px; height: 26px; background: #cf5650; color: #fff; font-weight: 700; line-height: 20px; padding-bottom: 4px; }
.exit { width: 72px; height: 38px; margin: 0 0 2px 2px; padding-bottom: 3px; border: 2px outset #999; outline: 1px dotted #111; outline-offset: -7px; font-size: 17px; background: #eee; }
.grid { display: grid; grid-template-columns: 34px 34px; grid-auto-rows: 33px; padding-left: 3px; }
.dots { grid-auto-rows: 34px; }
.tools { padding-top: 2px; padding-bottom: 2px; }
.grid .on { border: 1px solid #fff; border-top-color: #888; border-left-color: #888; background: #fafafa; }
.grid i { width: 25px; height: 25px; }
.letter { font-size: 24px; font-family: "Liberation Sans", sans-serif; }
.palette hr { height: 2px; margin: 5px; border: 0; border-top: 1px solid #888; background: #fff; }

.mark { position: absolute; right: 34px; top: 30px; display: flex; align-items: center; gap: 6px; height: 52px; color: #fff; font-size: 32px; text-shadow: 0 0 3px #999, 0 0 4px #aaa; pointer-events: none; }
.mark span { font-weight: 500; }
.mark b { font: italic 900 35px Lato, sans-serif; }
</style>
